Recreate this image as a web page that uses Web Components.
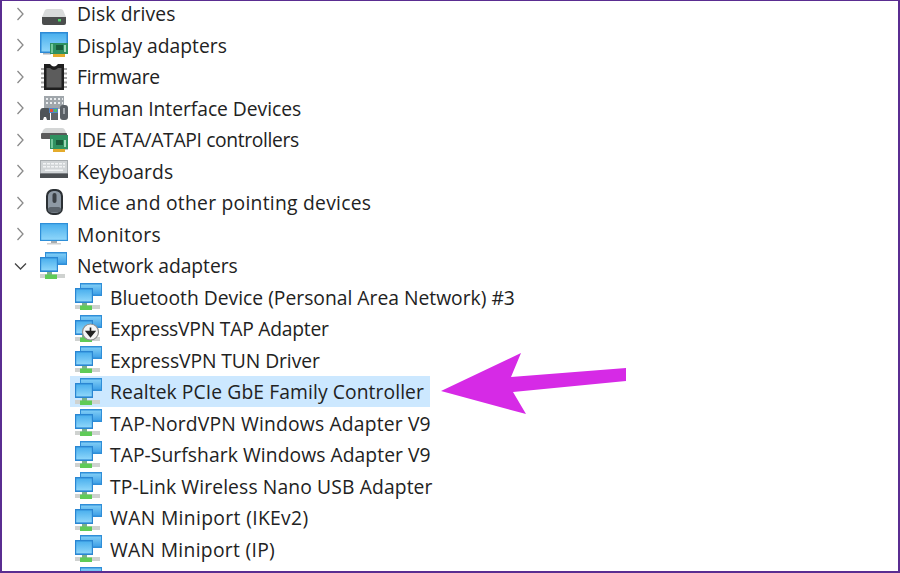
<!DOCTYPE html>
<html><head><meta charset="utf-8"><title>Device Manager</title>
<style>html,body{margin:0;padding:0;background:#fff}</style></head>
<body>
<dm-frame>
<dm-row icon="disk" label="Disk drives" collapsed track=".1"></dm-row>
<dm-row icon="display" label="Display adapters" collapsed></dm-row>
<dm-row icon="chip" label="Firmware" collapsed track="-.25"></dm-row>
<dm-row icon="hid" label="Human Interface Devices" collapsed track="-.04"></dm-row>
<dm-row icon="ide" label="IDE ATA/ATAPI controllers" collapsed track="-.36"></dm-row>
<dm-row icon="keyboard" label="Keyboards" collapsed track=".1"></dm-row>
<dm-row icon="mouse" label="Mice and other pointing devices" collapsed track=".26"></dm-row>
<dm-row icon="monitor" label="Monitors" collapsed track=".35"></dm-row>
<dm-row icon="net" label="Network adapters" expanded track="-.06"></dm-row>
<dm-row icon="net" label="Bluetooth Device (Personal Area Network) #3" child></dm-row>
<dm-row icon="netdown" label="ExpressVPN TAP Adapter" child track="-.23"></dm-row>
<dm-row icon="net" label="ExpressVPN TUN Driver" child track="-.09"></dm-row>
<dm-row icon="net" label="Realtek PCIe GbE Family Controller" child selected track=".09"></dm-row>
<dm-row icon="net" label="TAP-NordVPN Windows Adapter V9" child track=".17"></dm-row>
<dm-row icon="net" label="TAP-Surfshark Windows Adapter V9" child track=".06"></dm-row>
<dm-row icon="net" label="TP-Link Wireless Nano USB Adapter" child track=".12"></dm-row>
<dm-row icon="net" label="WAN Miniport (IKEv2)" child track=".35"></dm-row>
<dm-row icon="net" label="WAN Miniport (IP)" child track=".3"></dm-row>
<dm-row icon="net" label="" child></dm-row>
</dm-frame>
<script>
const GRAD = `<defs><linearGradient id="b" x1="0" y1="0" x2="0" y2="1"><stop offset="0" stop-color="#7fcdf6"/><stop offset="1" stop-color="#3fa0e6"/></linearGradient>
<linearGradient id="s" x1="0" y1="0" x2="0" y2="1"><stop offset="0" stop-color="#4bb0ee"/><stop offset="1" stop-color="#8ed6fa"/></linearGradient></defs>`;
const NET = GRAD + `
<rect x="0" y="22" width="25" height="4" fill="#cfd2d0"/>
<rect x="5" y="0" width="22" height="13" fill="#2f8ed8"/><rect x="6" y="1.5" width="20" height="10" fill="url(#b)"/>
<rect x="0" y="5" width="18" height="15" fill="#2a86d2"/><rect x="1.2" y="6.4" width="15.6" height="12" fill="url(#s)"/>
<rect x="7" y="20" width="5" height="3" fill="#7cb08a"/>
<rect x="5" y="22.5" width="12" height="4.5" fill="#5fcb57"/>`;
const CARD = `<rect x="10" y="12" width="18" height="11" fill="#2f9160"/><rect x="11" y="13" width="2" height="9" fill="#74c79a"/><rect x="16" y="14" width="7" height="5" fill="#1a5c3b"/><rect x="24" y="14" width="2" height="7" fill="#9fd8b8"/><rect x="13" y="23" width="12" height="3" fill="#e4ab2c"/>`;
const ICONS = {
disk:`<path d="M5 10Q6 9 8 9H20Q22 9 23 10L26 17H2Z" fill="#d9dbdb"/><path d="M2 17H26V23Q26 25 24 25H4Q2 25 2 23Z" fill="#4b4d4d"/><rect x="18" y="19" width="3" height="2.5" fill="#4fd066"/>`,
display:GRAD+`<rect x="0" y="1" width="28" height="21" fill="#2d8ad6"/><rect x="1.5" y="2.5" width="25" height="18" fill="url(#s)"/><rect x="3" y="22" width="8" height="1.5" fill="#aab2b8"/>`+CARD,
chip:`<path d="M1 5h4v2H1zM1 9.5h4v2H1zM1 14h4v2H1zM1 18.5h4v2H1zM1 23h4v2H1zM23 5h4v2h-4zM23 9.5h4v2h-4zM23 14h4v2h-4zM23 18.5h4v2h-4zM23 23h4v2h-4z" fill="#a8a8a8"/>
<path d="M4 1H10Q14 6 18 1H24V27H4Z" fill="#1f1f1f"/><path d="M6.5 5H10Q14 9 18 5H21.5V24.5H6.5Z" fill="#5c5c5c"/>`,
hid:`<rect x="4" y="2" width="20" height="13" fill="#a0a6ab"/><path d="M6 4h2v2H6zM10 4h2v2h-2zM14 4h2v2h-2zM18 4h2v2h-2zM22 4h1v2h-1zM6 8h2v2H6zM10 8h2v2h-2zM14 8h2v2h-2zM18 8h2v2h-2zM22 8h1v2h-1z" fill="#e9ecee"/>
<path d="M0 18Q0 14 3 14H8Q10 14 10 18V26H7L6 23H4L3 26H0Z" fill="#4f5458"/><rect x="9" y="14" width="9" height="5" fill="#4f86c8"/><rect x="10" y="15" width="3" height="3" fill="#e2523c"/><rect x="14" y="15" width="3" height="3" fill="#58b85c"/>
<path d="M11 19H18V26H11Z" fill="#5f6468"/><rect x="20" y="11" width="8" height="15" rx="3" fill="#5a6066"/><rect x="23" y="14" width="2" height="6" fill="#9fa5aa"/>`,
ide:`<path d="M2 7Q3 2 7 2H22Q25 2 26 7Z" fill="#d4d6d6"/><rect x="1" y="7" width="26" height="6" rx="1" fill="#5a5a5a"/><rect x="24" y="9" width="4" height="15" fill="#c0c0c0"/>`+CARD.replace('y="12" width="18" height="11"','y="9" width="18" height="14"'),
keyboard:`<rect x="0" y="3" width="28" height="18" fill="#a8adb0"/><rect x="1" y="4" width="26" height="12" fill="#d0d4d6"/><path d="M3 6h3v1.6H3zM7 6h3v1.6H7zM11 6h3v1.6h-3zM15 6h3v1.6h-3zM19 6h3v1.6h-3zM23 6h2v1.6h-2zM3 9h3v1.6H3zM7 9h3v1.6H7zM11 9h3v1.6h-3zM15 9h3v1.6h-3zM19 9h3v1.6h-3zM23 9h2v1.6h-2zM5 12.5h18v1.6H5z" fill="#f2f4f5"/><rect x="0" y="16.5" width="28" height="4.5" fill="#4b4f52"/>`,
mouse:`<rect x="6" y="0" width="17" height="26" rx="7" fill="#2b3034"/><rect x="8" y="2" width="13" height="22" rx="5.5" fill="#8e99a4"/><rect x="12.5" y="4" width="4" height="10" rx="2" fill="#3a3f44"/><rect x="8" y="18" width="13" height="5.5" rx="2.7" fill="#5b636b"/>`,
monitor:GRAD+`<rect x="0" y="3" width="28" height="18" fill="#2e8fd8"/><rect x="1.2" y="4.2" width="25.6" height="15.6" fill="url(#s)"/><rect x="11" y="21" width="6" height="2" fill="#a6acb0"/><rect x="7" y="23" width="14" height="1.5" fill="#d0d0d0"/>`,
net:NET,
netdown:NET+`<circle cx="15.5" cy="17" r="8" fill="#f5f5f5" stroke="#8d8d8d" stroke-width="1.2"/><path d="M15.5 12.5V18M11.5 16.5H19.5L15.5 21.5Z" stroke="#222" stroke-width="1.6" fill="#222"/>`
};

class DmIcon extends HTMLElement {
  connectedCallback(){
    const r = this.shadowRoot || this.attachShadow({mode:'open'});
    r.innerHTML = `<style>:host{display:block;width:28px;height:28px;flex:none}svg{display:block;filter:blur(.4px)}</style>
    <svg width="28" height="28" viewBox="0 0 28 28">${ICONS[this.getAttribute('name')]||''}</svg>`;
  }
}
customElements.define('dm-icon', DmIcon);

class DmRow extends HTMLElement {
  connectedCallback(){
    const r = this.shadowRoot || this.attachShadow({mode:'open'});
    const child = this.hasAttribute('child');
    const exp = this.hasAttribute('expanded');
    const col = this.hasAttribute('collapsed');
    const chev = exp ? `<path d="M2 5.5L7.5 11L13 5.5" fill="none" stroke="#444" stroke-width="1.3"/>`
      : col ? `<path d="M4.5 2L10 8L4.5 14" fill="none" stroke="#8a8a8a" stroke-width="1.3"/>` : '';
    r.innerHTML = `<style>
      :host{display:block;height:31.5px;font:19.3px "Open Sans","Noto Sans",sans-serif;color:#222}
      .row{display:flex;align-items:center;height:100%;padding-left:${child?'66':'11'}px}
      .tw{width:14px;height:16px;flex:none;margin-right:11px;display:${child?'none':'block'}}
      .tw svg{display:block}
      .sel{display:flex;align-items:center;height:31px;padding:0 6px 0 ${child?5:0}px;gap:${child?7:9}px;margin-left:2px}
      :host([selected]) .sel{background:#cce8ff}
      .label{white-space:nowrap;line-height:31px;letter-spacing:${parseFloat(this.getAttribute('track'))||0}px}
    </style>
    <div class="row">
      <div class="tw"><svg width="14" height="16" viewBox="0 0 14 16">${chev}</svg></div>
      <div class="sel"><dm-icon name="${this.getAttribute('icon')}"></dm-icon><span class="label">${this.getAttribute('label')}</span></div>
    </div>`;
  }
}
customElements.define('dm-row', DmRow);

class DmFrame extends HTMLElement {
  constructor(){
    super();
    this.attachShadow({mode:'open'}).innerHTML = `<style>
      :host{display:block;box-sizing:border-box;width:900px;height:573px;position:relative;overflow:hidden;background:#fff;
        border:solid #5a2d91;border-width:1px 2px 2px 2px}
      .tree{margin-top:-3px}
      svg.arrow{position:absolute;left:-2px;top:-1px;pointer-events:none}
    </style>
    <div class="tree"><slot></slot></div>
    <svg class="arrow" width="900" height="573" viewBox="0 0 900 573"><polygon points="441,391 521,353 511,377 626,368 626,381 513,392 526,414" fill="#d62ae6"/></svg>`;
  }
}
customElements.define('dm-frame', DmFrame);
</script>
</body></html>
